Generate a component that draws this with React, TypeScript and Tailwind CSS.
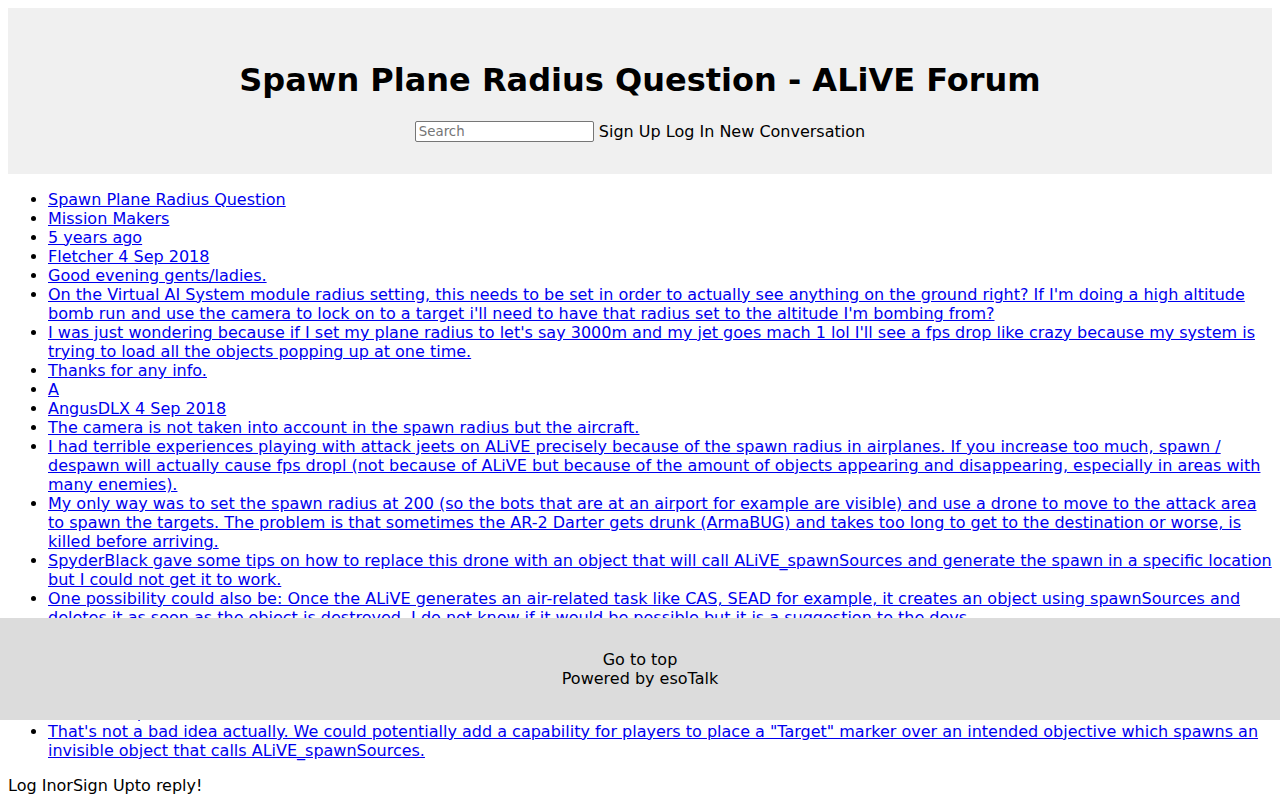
const posts: string[] = [
   "Spawn Plane Radius Question",
   "Mission Makers",
   "5 years ago",
   "Fletcher 4 Sep 2018",
   "Good evening gents/ladies.",
   "On the Virtual AI System module radius setting, this needs to be set in order to actually see anything on the ground right? If I'm doing a high altitude bomb run and use the camera to lock on to a target i'll need to have that radius set to the altitude I'm bombing from?",
   "I was just wondering because if I set my plane radius to let's say 3000m and my jet goes mach 1 lol I'll see a fps drop like crazy because my system is trying to load all the objects popping up at one time.",
   "Thanks for any info.",
   "A",
   "AngusDLX 4 Sep 2018",
   "The camera is not taken into account in the spawn radius but the aircraft.",
   "I had terrible experiences playing with attack jeets on ALiVE precisely because of the spawn radius in airplanes. If you increase too much, spawn / despawn will actually cause fps dropl (not because of ALiVE but because of the amount of objects appearing and disappearing, especially in areas with many enemies).",
   "My only way was to set the spawn radius at 200 (so the bots that are at an airport for example are visible) and use a drone to move to the attack area to spawn the targets. The problem is that sometimes the AR-2 Darter gets drunk (ArmaBUG) and takes too long to get to the destination or worse, is killed before arriving.",
   "SpyderBlack gave some tips on how to replace this drone with an object that will call ALiVE_spawnSources and generate the spawn in a specific location but I could not get it to work.",
   "One possibility could also be: Once the ALiVE generates an air-related task like CAS, SEAD for example, it creates an object using spawnSources and deletes it as soon as the object is destroyed. I do not know if it would be possible but it is a suggestion to the devs.",
   "Thanks for the help.",
   "F",
   "Fletcher 5 Sep 2018",
   "F",
   "Friznit 6 Sep 2018",
   "That's not a bad idea actually. We could potentially add a capability for players to place a \"Target\" marker over an intended objective which spawns an invisible object that calls ALiVE_spawnSources.",
]

export default function App() {
   return (
      <div className="relative min-h-[811px] bg-white p-2 text-[16px] leading-[19px] text-black" style={{ fontFamily: '"DejaVu Sans", sans-serif' }}>

         {/* Header */}
         <div className="bg-[#f0f0f0] p-8 text-center">
            <h1 className="my-[21.44px] text-[32px] font-bold leading-[38px]">Spawn Plane Radius Question - ALiVE Forum</h1>
            <div className="flex h-[21px] items-center justify-center">
               <input
                  type="text"
                  placeholder="Search"
                  className="h-[21px] w-[179px] rounded-[2px] border border-[#767676] bg-white px-[3px] text-[13.33px] placeholder:text-[#757575] focus:outline-none"
               />
               <span className="ml-[5px]">Sign Up Log In New Conversation</span>
            </div>
         </div>

         {/* Posts */}
         <ul className="my-4 list-disc pl-10">
            {posts.map((text, i) => (
               <li key={i}>
                  <a href="#" className="text-[#0000ee] underline">{text}</a>
               </li>
            ))}
         </ul>

         <div>Log InorSign Upto reply!</div>

         {/* Footer */}
         <div className="absolute left-0 right-0 top-[618px] bg-[#dcdcdc] py-8 text-center">
            <div>Go to top</div>
            <div>Powered by esoTalk</div>
         </div>

      </div>
   )
}
